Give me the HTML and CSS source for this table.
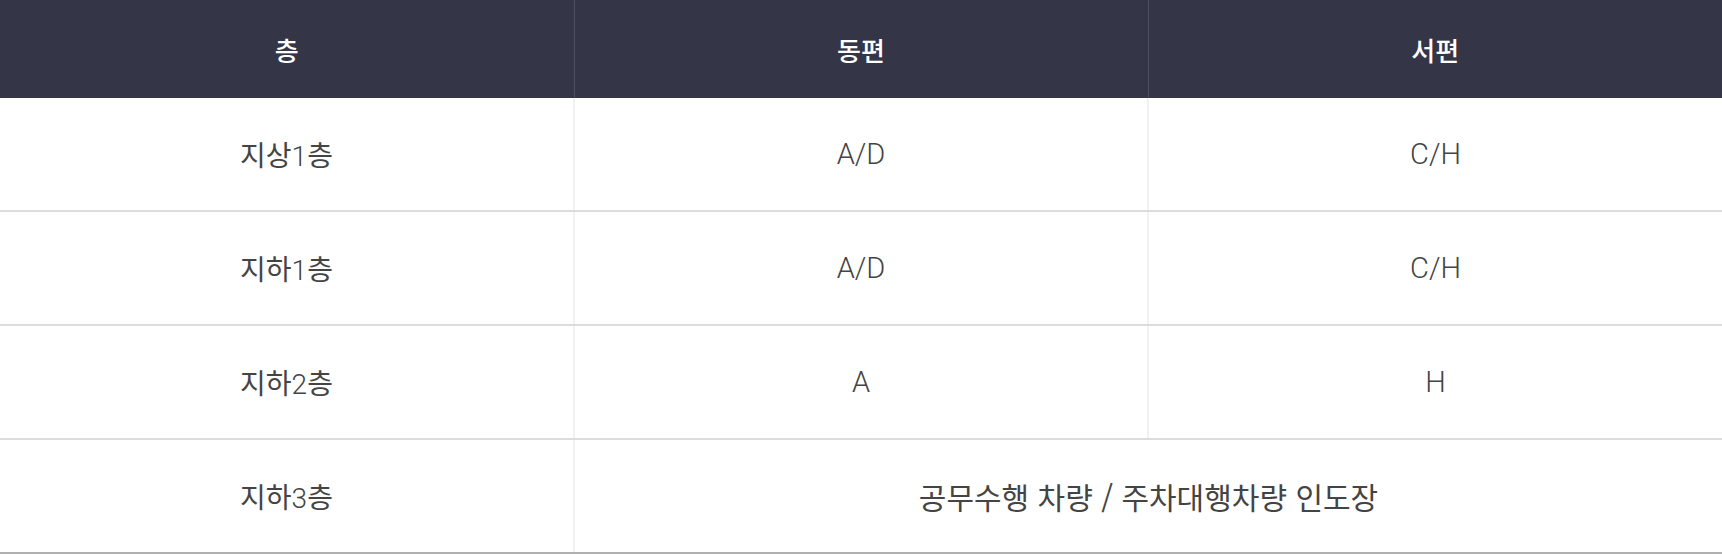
FILE: index.html
```html
<!DOCTYPE html>
<html lang="ko">
<head>
<meta charset="utf-8">
<link rel="stylesheet" href="styles.css">
</head>
<body>
<table class="floor-table">
  <thead>
    <tr>
      <th>층</th>
      <th>동편</th>
      <th>서편</th>
    </tr>
  </thead>
  <tbody>
    <tr>
      <td class="floor">지상<span class="num">1</span>층</td>
      <td class="code">A/D</td>
      <td class="code">C/H</td>
    </tr>
    <tr>
      <td class="floor">지하<span class="num">1</span>층</td>
      <td class="code">A/D</td>
      <td class="code">C/H</td>
    </tr>
    <tr>
      <td class="floor">지하<span class="num">2</span>층</td>
      <td class="code">A</td>
      <td class="code">H</td>
    </tr>
    <tr class="last">
      <td class="floor">지하<span class="num">3</span>층</td>
      <td class="wide" colspan="2">공무수행 차량 / 주차대행차량 인도장</td>
    </tr>
  </tbody>
</table>
</body>
</html>
```

FILE: styles.css
```css
html, body {
  margin: 0;
  padding: 0;
  background: #ffffff;
}

.floor-table {
  width: 1722px;
  border-collapse: collapse;
  table-layout: fixed;
  font-family: "Noto Sans CJK KR", sans-serif;
}

.floor-table th {
  height: 98px;
  padding: 0;
  background: #343648;
  color: #ffffff;
  font-size: 26px;
  font-weight: 500;
  text-align: center;
  vertical-align: middle;
  border-left: 1px solid #4b4e60;
}

.floor-table th:first-child {
  border-left: none;
}

.floor-table td {
  height: 112px;
  padding: 0;
  text-align: center;
  vertical-align: middle;
  font-size: 28px;
  font-weight: 400;
  color: #444444;
  border-bottom: 2px solid #dcdcdc;
  border-left: 2px solid #f1f1f5;
}

.floor-table td.floor {
  border-left: none;
}

.floor-table td.wide {
  font-size: 30px;
}

.floor-table .num {
  font-family: Roboto, sans-serif;
  font-weight: 300;
}

.floor-table td.code {
  font-family: Roboto, sans-serif;
  font-weight: 300;
  font-size: 29px;
}

.floor-table tr.last td {
  border-bottom: 2px solid #b0b0b0;
}
```
